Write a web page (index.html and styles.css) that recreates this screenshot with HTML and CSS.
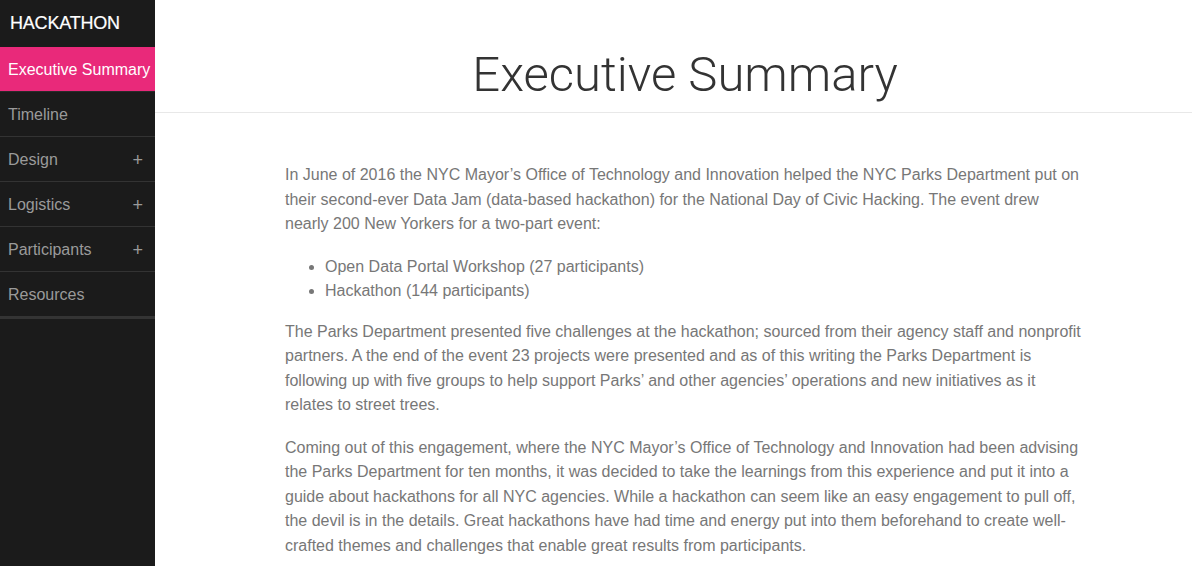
FILE: index.html
```html
<!DOCTYPE html>
<html lang="en">
<head>
<meta charset="utf-8">
<title>Hackathon Guide - Executive Summary</title>
<link rel="stylesheet" href="styles.css">
</head>
<body>
<div class="layout">
  <nav class="sidebar">
    <div class="brand">HACKATHON</div>
    <ul class="menu">
      <li class="item active"><span>Executive Summary</span></li>
      <li class="item"><span>Timeline</span></li>
      <li class="item"><span>Design</span><span class="plus">+</span></li>
      <li class="item"><span>Logistics</span><span class="plus">+</span></li>
      <li class="item"><span>Participants</span><span class="plus">+</span></li>
      <li class="item last"><span>Resources</span></li>
    </ul>
  </nav>
  <main class="main">
    <header class="page-head">
      <h1 class="title">Executive Summary</h1>
    </header>
    <article class="content">
      <p>In June of 2016 the NYC Mayor’s Office of Technology and Innovation helped the NYC Parks Department put on their second-ever Data Jam (data-based hackathon) for the National Day of Civic Hacking. The event drew nearly 200 New Yorkers for a two-part event:</p>
      <ul class="bullets">
        <li>Open Data Portal Workshop (27 participants)</li>
        <li>Hackathon (144 participants)</li>
      </ul>
      <p>The Parks Department presented five challenges at the hackathon; sourced from their agency staff and nonprofit partners. A the end of the event 23 projects were presented and as of this writing the Parks Department is following up with five groups to help support Parks’ and other agencies’ operations and new initiatives as it relates to street trees.</p>
      <p>Coming out of this engagement, where the NYC Mayor’s Office of Technology and Innovation had been advising the Parks Department for ten months, it was decided to take the learnings from this experience and put it into a guide about hackathons for all NYC agencies. While a hackathon can seem like an easy engagement to pull off, the devil is in the details. Great hackathons have had time and energy put into them beforehand to create well-crafted themes and challenges that enable great results from participants.</p>
    </article>
  </main>
</div>
</body>
</html>
```
FILE: styles.css
```css
* { box-sizing: border-box; }
html, body { margin: 0; padding: 0; }
body {
  font-family: "Liberation Sans", Arial, sans-serif;
  background: #fff;
}
.layout {
  display: flex;
  height: 100vh;
  overflow: hidden;
}
.sidebar {
  width: 155px;
  flex: 0 0 155px;
  background: #1b1b1b;
}
.brand {
  height: 47px;
  padding: 13px 0 0 10px;
  color: #fff;
  font-size: 18px;
  line-height: 20px;
  letter-spacing: -0.2px;
  -webkit-text-stroke: 0.2px #fff;
}
.menu {
  list-style: none;
  margin: 0;
  padding: 0;
}
.item {
  display: flex;
  justify-content: space-between;
  align-items: center;
  height: 45px;
  padding: 2px 12px 0 8px;
  border-bottom: 1px solid #333;
  color: #9a9a9a;
  font-size: 16px;
}
.item.active {
  background: #e9297a;
  color: #fff;
  border-bottom: 1px solid #2a2a2a;
  padding-right: 0;
}
.item.last {
  border-bottom: 3px solid #343434;
  height: 47px;
}
.plus {
  font-size: 18px;
  color: #9a9a9a;
}
.main {
  flex: 1;
  min-width: 0;
}
.page-head {
  height: 113px;
  border-bottom: 1px solid #e8e8e8;
  padding-left: 130px;
}
.title {
  width: 800px;
  margin: 0;
  padding-top: 45px;
  text-align: center;
  font-family: Roboto, "Liberation Sans", sans-serif;
  font-weight: 300;
  font-size: 49px;
  line-height: 60px;
  color: #333;
}
.content {
  width: 800px;
  margin-left: 130px;
  padding-top: 50px;
  color: #777;
  font-size: 16px;
  line-height: 24.5px;
}
.content p {
  margin: 0 0 18px;
}
.bullets {
  margin: 0 0 16px;
  padding-left: 40px;
}
```
